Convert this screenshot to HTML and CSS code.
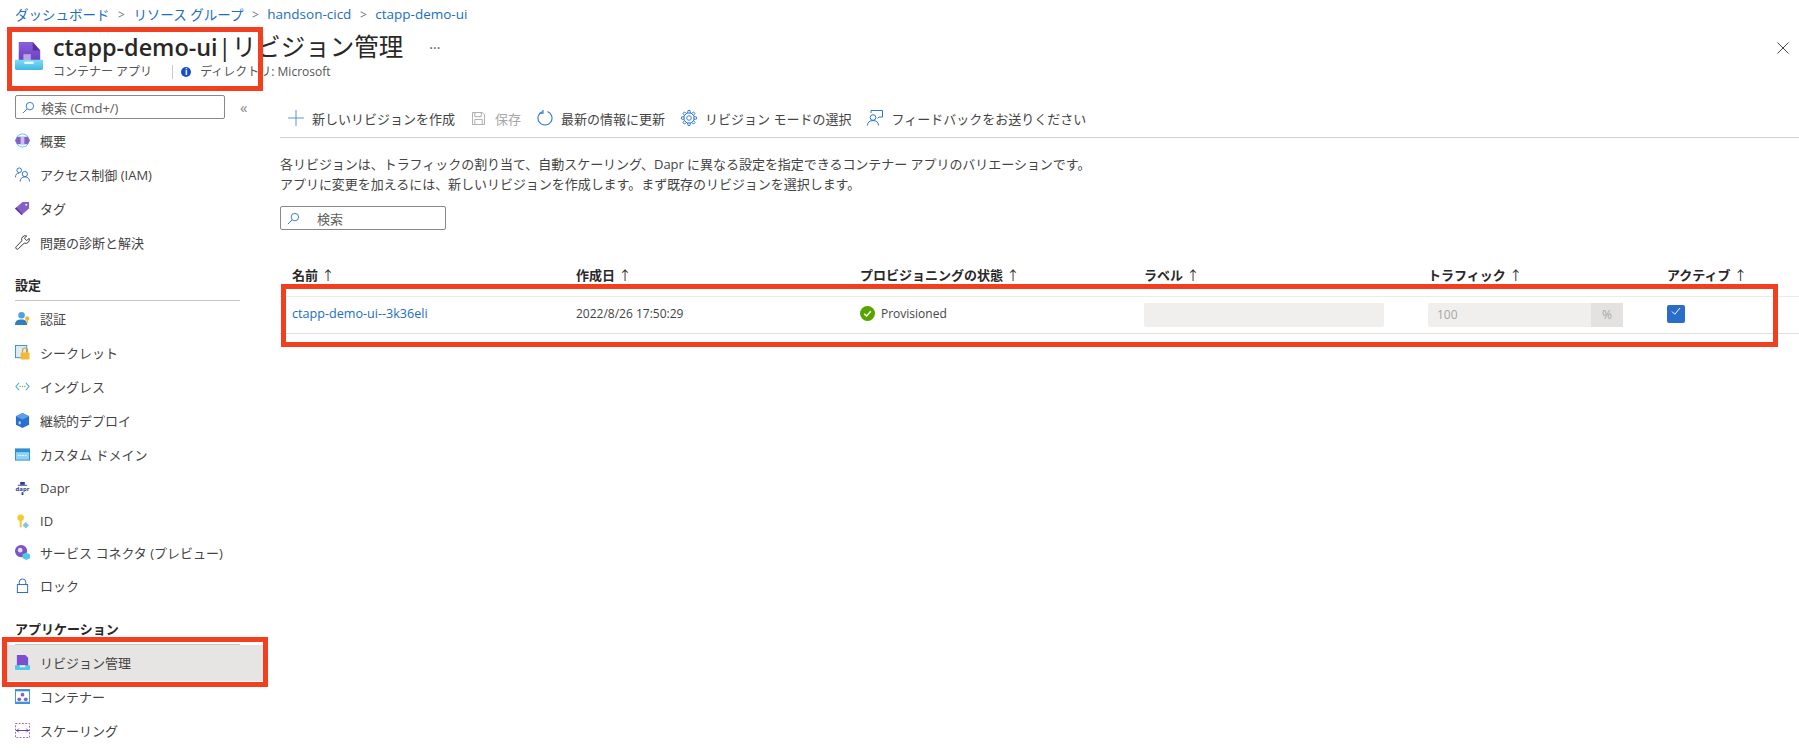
FILE: index.html
```html
<!DOCTYPE html>
<html lang="ja">
<head>
  <meta charset="UTF-8">
  <title>ctapp-demo-ui | リビジョン管理</title>
  <link rel="stylesheet" href="styles.css">
</head>
<body>

  <nav class="crumbs">
    <a>ダッシュボード</a><span class="sep">&gt;</span>
    <a>リソース グループ</a><span class="sep">&gt;</span>
    <a>handson-cicd</a><span class="sep">&gt;</span>
    <a>ctapp-demo-ui</a>
  </nav>

  <header class="title-bar">
    <svg class="app-icon" viewBox="0 0 30 32">
      <defs>
        <linearGradient id="tray" x1="0" y1="0" x2="0" y2="1"><stop offset="0" stop-color="#7fdcf3"/><stop offset="1" stop-color="#3fb8e6"/></linearGradient>
        <linearGradient id="file" x1="0" y1="0" x2="0" y2="1"><stop offset="0" stop-color="#8a5fdc"/><stop offset="1" stop-color="#6a3fbf"/></linearGradient>
      </defs>
      <path d="M4 1h15l8 9v12H4z" fill="url(#file)"/>
      <path d="M19 1l8 9h-8z" fill="#57309f"/>
      <rect x="9" y="14" width="8" height="8" fill="#b9a2ea"/>
      <path d="M0 20h30v9a2 2 0 0 1-2 2H2a2 2 0 0 1-2-2z" fill="url(#tray)"/>
      <rect x="10" y="22" width="10" height="2.500" fill="#eef9fc"/>
    </svg>
    <div class="title-text">
      <h1><b>ctapp-demo-ui</b> | リビジョン管理<span class="more">···</span></h1>
      <div class="subtitle">
        <span>コンテナー アプリ</span>
        <span class="divider"></span>
        <span class="info">i</span>
        <span>ディレクトリ: Microsoft</span>
      </div>
    </div>
    <svg class="close" viewBox="0 0 12 12"><path d="M.5.500l11 11M11.500.500l-11 11" stroke="#444" fill="none"/></svg>
  </header>

  <div class="main">
    <aside class="side">
      <div class="side-search-row">
        <div class="search side-search">
          <svg class="mag" viewBox="0 0 14 14"><circle cx="8.500" cy="5.500" r="4" fill="none" stroke="#2a74d4"/><path d="M5.500 8.500L1 13" stroke="#2a74d4" fill="none"/></svg>
          <span>検索 (Cmd+/)</span>
        </div>
        <span class="collapse">«</span>
      </div>

      <a class="item"><svg viewBox="0 0 16 16"><circle cx="8" cy="8" r="7" fill="none" stroke="#5cc3e6"/><path d="M0 8l2.500-4h11L16 8l-2.500 4h-11z" fill="#8661c5"/><rect x="6" y="4" width="4" height="8" fill="#cdbdf0"/></svg>概要</a>
      <a class="item"><svg viewBox="0 0 16 16"><g fill="none" stroke="#2a6fd0"><circle cx="4.500" cy="3.500" r="2.500"/><path d="M.5 11c0-3 1.500-4.500 4-4.500"/><circle cx="10.500" cy="7.500" r="2.800"/><path d="M5.500 15.500c0-3 2-5 5-5s5 2 5 5"/></g></svg>アクセス制御 (IAM)</a>
      <a class="item"><svg viewBox="0 0 16 16"><path d="M0 8l8-7h7v7l-8 7z" fill="#8661c5"/><path d="M0 8l7 7 1-1-6.500-7z" fill="#5a34a8"/><circle cx="12" cy="4" r="1" fill="#fff"/></svg>タグ</a>
      <a class="item"><svg viewBox="0 0 16 16"><path d="M15 3.500l-2.500 2.500-2.500-2.500L12.500 1A4 4 0 0 0 7.300 6.200L1.300 12.500a1.500 1.500 0 0 0 2.200 2.200l6.300-6A4 4 0 0 0 15 3.500z" fill="none" stroke="#333"/></svg>問題の診断と解決</a>

      <h2 class="group">設定</h2>
      <a class="item"><svg viewBox="0 0 16 16"><circle cx="7" cy="4.500" r="3.500" fill="#4fa3d8"/><path d="M0 15c0-5 3-6 7-6s6 2 6 6z" fill="#2c7fc0"/><circle cx="13" cy="8" r="2.300" fill="#f2b632"/><rect x="12.300" y="9" width="1.500" height="4" fill="#f2b632"/></svg>認証</a>
      <a class="item"><svg viewBox="0 0 16 16"><rect x=".5" y=".5" width="12" height="13" fill="#dcecf8" stroke="#3c8fd0"/><rect x="6" y="8" width="9.500" height="7.500" rx="1" fill="#f5b82e"/><path d="M8 8V6a2.700 2.700 0 0 1 5.500 0v2" fill="none" stroke="#e29f17" stroke-width="1.200"/></svg>シークレット</a>
      <a class="item"><svg viewBox="0 0 16 10" class="wide"><path d="M4.500 1L1 5l3.500 4M11.500 1L15 5l-3.500 4" fill="none" stroke="#4aa8e0" stroke-width="1.200"/><g fill="#7cb82f"><circle cx="5.500" cy="5" r=".8"/><circle cx="8" cy="5" r=".8"/><circle cx="10.500" cy="5" r=".8"/></g></svg>イングレス</a>
      <a class="item"><svg viewBox="0 0 16 16"><path d="M8 0l7 3.500v9L8 16l-7-3.500v-9z" fill="#2a6fd0"/><path d="M8 0l7 3.500L8 7 1 3.500z" fill="#5ea0ee"/><rect x="4" y="9" width="2" height="3" fill="#cfe3fa"/></svg>継続的デプロイ</a>
      <a class="item"><svg viewBox="0 0 16 13" class="wide"><rect width="16" height="13" fill="#2f8fd0"/><rect x="1" y="4" width="14" height="8" fill="#8fd3f2"/><path d="M3 7.500h10" stroke="#fff" stroke-dasharray="1.500 1"/></svg>カスタム ドメイン</a>
      <a class="item"><svg viewBox="0 0 16 14" class="wide"><rect x="5.500" y="0" width="5" height="3" fill="#2b3f8f"/><rect x="3" y="3" width="10" height="1" fill="#2b3f8f"/><text x="8" y="10" text-anchor="middle" class="dapr-mark">dapr</text><rect x="7" y="11" width="2" height="3" fill="#2b3f8f"/></svg>Dapr</a>
      <a class="item row-id"><svg viewBox="0 0 16 16"><circle cx="6" cy="4" r="3.500" fill="#f5c932"/><rect x="5" y="6" width="2.200" height="8" fill="#f5c932"/><path d="M11.500 8.500l3.500 3.500-3.500 3.500L8 12z" fill="#7fc4ea"/></svg>ID</a>
      <a class="item row-conn"><svg viewBox="0 0 16 16"><circle cx="6.500" cy="6.500" r="6.500" fill="#7a55c4"/><circle cx="5.500" cy="5.500" r="2.500" fill="#e4dcf5"/><path d="M12 8l4 2v4l-4 2-4-2v-4z" fill="#50c8ea"/></svg>サービス コネクタ (プレビュー)</a>
      <a class="item"><svg viewBox="0 0 16 16"><rect x="2.500" y="7" width="11" height="8.500" fill="none" stroke="#2a5fd0"/><path d="M4.500 7V4.500a3.500 3.500 0 0 1 7 0V7" fill="none" stroke="#2a5fd0"/></svg>ロック</a>

      <h2 class="group group-app">アプリケーション</h2>
      <a class="item current"><svg viewBox="0 0 16 16"><path d="M2 0h9l3 3v10H2z" fill="#7b4fcf"/><path d="M0 11h16v4a1 1 0 0 1-1 1H1a1 1 0 0 1-1-1z" fill="#50c8ea"/><rect x="5" y="11" width="6" height="2" fill="#e8f6fb"/></svg>リビジョン管理</a>
      <a class="item"><svg viewBox="0 0 16 16"><rect width="16" height="16" fill="#3c96d2"/><rect x="1" y="2.500" width="14" height="11" fill="#fff"/><g fill="#8661c5"><circle cx="8" cy="6" r="2"/><circle cx="4.500" cy="11" r="2"/><circle cx="11.500" cy="11" r="2"/></g></svg>コンテナー</a>
      <a class="item"><svg viewBox="0 0 16 16"><rect x=".5" y=".5" width="15" height="15" fill="none" stroke="#8661c5" stroke-dasharray="2 1.500"/><path d="M1 8h14M4 6l-2 2 2 2M12 6l2 2-2 2" fill="none" stroke="#5a34a8"/></svg>スケーリング</a>
    </aside>

    <section class="content">
      <div class="toolbar">
        <a class="tool"><svg viewBox="0 0 16 16"><path d="M8 0v16M0 8h16" stroke="#5e93dd" fill="none"/></svg>新しいリビジョンを作成</a>
        <a class="tool off"><svg viewBox="0 0 14 14"><path d="M.5.500h10.500l2.500 2.500v10.500H.5z M3 .5v4.500h7V.5 M3 13.500V8h8v5.500" fill="none" stroke="#a8a8a8"/></svg>保存</a>
        <a class="tool"><svg viewBox="0 0 16 16"><path d="M5.500 1.500A7 7 0 1 0 10.500 1.500" fill="none" stroke="#2a74d4" stroke-width="1.100"/><path d="M6 0v3.200H2.800" fill="none" stroke="#2a74d4" stroke-width="1.100"/></svg>最新の情報に更新</a>
        <a class="tool"><svg viewBox="0 0 16 16">
          <defs><path id="tooth" d="M6.600 3 7 .5h2L9.400 3z" fill="#fff" stroke="#2a74d4" stroke-width=".9" stroke-linejoin="round"/></defs>
          <circle cx="8" cy="8" r="5.300" fill="none" stroke="#2a74d4" stroke-width=".9"/>
          <circle cx="8" cy="8" r="2.300" fill="none" stroke="#2a74d4" stroke-width=".9"/>
          <use href="#tooth"/><use href="#tooth" transform="rotate(45 8 8)"/><use href="#tooth" transform="rotate(90 8 8)"/><use href="#tooth" transform="rotate(135 8 8)"/><use href="#tooth" transform="rotate(180 8 8)"/><use href="#tooth" transform="rotate(225 8 8)"/><use href="#tooth" transform="rotate(270 8 8)"/><use href="#tooth" transform="rotate(315 8 8)"/>
        </svg>リビジョン モードの選択</a>
        <a class="tool"><svg viewBox="0 0 16 16"><circle cx="6" cy="7.500" r="2.800" fill="none" stroke="#2a74d4"/><path d="M.5 15.500c0-3 2-5 5.500-5s5.500 2 5.500 5" fill="none" stroke="#2a74d4"/><path d="M4 3V.5h11.500v6.500H12L10.500 8.500" fill="none" stroke="#2a74d4"/></svg>フィードバックをお送りください</a>
      </div>

      <p class="desc">各リビジョンは、トラフィックの割り当て、自動スケーリング、Dapr に異なる設定を指定できるコンテナー アプリのバリエーションです。<br>アプリに変更を加えるには、新しいリビジョンを作成します。まず既存のリビジョンを選択します。</p>

      <div class="search filter">
        <svg class="mag" viewBox="0 0 14 14"><circle cx="8.500" cy="5.500" r="4" fill="none" stroke="#2a74d4"/><path d="M5.500 8.500L1 13" stroke="#2a74d4" fill="none"/></svg>
        <span>検索</span>
      </div>

      <div class="grid grid-head">
        <div>名前 <span class="arrow">↑</span></div>
        <div>作成日 <span class="arrow">↑</span></div>
        <div>プロビジョニングの状態 <span class="arrow">↑</span></div>
        <div>ラベル <span class="arrow">↑</span></div>
        <div>トラフィック <span class="arrow">↑</span></div>
        <div>アクティブ <span class="arrow">↑</span></div>
      </div>
      <div class="grid grid-row">
        <div class="cell"><a class="link">ctapp-demo-ui--3k36eli</a></div>
        <div class="cell">2022/8/26 17:50:29</div>
        <div class="cell status">
          <svg viewBox="0 0 16 16"><circle cx="8" cy="8" r="8" fill="#57a300"/><path d="M4.500 8.300l2.500 2.400 4.500-5" fill="none" stroke="#fff" stroke-width="1.500"/></svg>
          Provisioned
        </div>
        <div><div class="field label-field"></div></div>
        <div><div class="field traffic"><span>100</span><span class="unit">%</span></div></div>
        <div><span class="check"><svg viewBox="0 0 12 12"><path d="M2 6.500l2.800 2.800L10 3" fill="none" stroke="#fff"/></svg></span></div>
      </div>
    </section>
  </div>

  <!-- red annotations over the screenshot -->
  <div class="mark mark-title"></div>
  <div class="mark mark-side"></div>
  <div class="mark mark-table"></div>

</body>
</html>
```

FILE: styles.css
```css
body {
  font-family: "Open Sans", "Noto Sans CJK JP", sans-serif;
  font-size: 13px;
  margin: 0;
  padding: 0;
  background-color: #fff;
  color: #323130;
  height: 751px;
  overflow: hidden;
  position: relative;
}
.crumbs {
  display: flex;
  align-items: center;
  height: 28px;
  padding-left: 15px;
  font-size: 13.5px;
  color: #1b6ec2;
}
.sep {
  margin: 0 8.5px;
  color: #777;
  font-size: 12px;
}
.title-bar {
  display: flex;
  height: 62px;
  padding-left: 15px;
}
.app-icon {
  width: 28px;
  height: 30px;
  margin-top: 13px;
  flex: none;
}
.title-text {
  margin-left: 10px;
}
h1 {
  margin: 0;
  padding-top: 2px;
  font-size: 24.5px;
  font-weight: 400;
  line-height: 34px;
  color: #292827;
  word-spacing: -6px;
}
h1 b {
  font-size: 23.4px;
  font-weight: 600;
}
.more {
  font-size: 14px;
  margin-left: 26px;
  vertical-align: 3px;
  color: #555;
}
.subtitle {
  display: flex;
  align-items: center;
  margin-top: -1px;
  font-size: 12px;
  line-height: 16px;
  color: #555;
}
.divider {
  width: 1px;
  height: 14px;
  background-color: #ccc;
  margin: 0 4px 0 20px;
}
.info {
  width: 10px;
  height: 10px;
  line-height: 10px;
  border-radius: 50%;
  background-color: #1a4fc4;
  color: #fff;
  font-size: 8px;
  font-weight: 700;
  text-align: center;
  margin: 0 9px 0 4px;
}
.close {
  width: 12px;
  height: 12px;
  position: absolute;
  top: 42px;
  right: 10px;
}
.main {
  display: flex;
}
.side {
  width: 240px;
  padding-left: 15px;
  flex: none;
}
.side-search-row {
  display: flex;
  align-items: center;
  height: 24px;
  margin-top: 5px;
  margin-bottom: 4px;
}
.search {
  display: flex;
  align-items: center;
  box-sizing: border-box;
  border: 1px solid #8a8886;
  border-radius: 2px;
  height: 24px;
  color: #605e5c;
  font-size: 13px;
}
.side-search {
  width: 210px;
}
.mag {
  width: 13px;
  height: 13px;
  margin: 0 6px;
}
.collapse {
  margin-left: 15px;
  font-size: 15px;
  color: #888;
}
.item {
  display: flex;
  align-items: center;
  height: 34px;
  color: #444;
  font-size: 13px;
}
.item svg {
  width: 15px;
  height: 15px;
  margin-right: 10px;
  flex: none;
}
.item svg.wide {
  height: 13px;
}
.dapr-mark {
  font-size: 6.500px;
  font-weight: 700;
  fill: #2b3f8f;
}
.row-id {
  height: 32px;
}
.row-conn {
  height: 31px;
}
.group {
  width: 225px;
  margin: 14px 0 0;
  height: 28px;
  line-height: 25px;
  box-sizing: border-box;
  font-size: 13px;
  font-weight: 600;
  color: #292827;
  border-bottom: 1px solid #c8c6c4;
}
.group-app {
  margin-top: 15px;
}
.item.current {
  background-color: #e6e5e3;
  width: 256px;
  height: 36px;
  margin-left: -8px;
  margin-bottom: -2px;
  padding-left: 8px;
  padding-bottom: 2px;
  box-sizing: border-box;
}
.content {
  flex: 1;
  padding-left: 25px;
  padding-top: 11px;
}
.toolbar {
  display: flex;
  align-items: center;
  box-sizing: border-box;
  height: 37px;
  border-bottom: 1px solid #d2d0ce;
  padding-left: 8px;
  padding-bottom: 2px;
  gap: 16px;
}
.tool {
  display: flex;
  align-items: center;
  color: #444;
}
.tool svg {
  width: 16px;
  height: 16px;
  margin-right: 8px;
}
.tool.off {
  color: #a6a6a6;
  margin-left: 1px;
}
.tool.off svg {
  width: 13px;
  height: 13px;
  margin-right: 10px;
}
.desc {
  margin: 16px 0 12px;
  line-height: 20px;
  letter-spacing: -0.04px;
  color: #444;
}
.filter {
  width: 166px;
}
.filter .mag {
  margin-right: 17px;
}
.grid {
  display: grid;
  grid-template-columns: 284px 284px 284px 284px 239px 1fr;
}
.grid > div {
  padding-left: 12px;
}
.grid-head {
  margin-top: 31px;
  height: 26px;
  align-items: center;
  font-weight: 600;
  color: #292827;
}
.arrow {
  font-weight: 400;
}
.grid-row {
  height: 38px;
  box-sizing: border-box;
  margin-top: 9px;
  align-items: center;
  border-top: 1px solid #edebe9;
  border-bottom: 1px solid #e1dfdd;
  color: #444;
  font-size: 12px;
}
.grid > .cell {
  padding-bottom: 4px;
}
.link {
  color: #1b6ec2;
  font-size: 12.600px;
}
.grid > .status {
  display: flex;
  align-items: center;
}
.status svg {
  width: 15px;
  height: 15px;
  margin-right: 6px;
}
.field {
  height: 24px;
  background-color: #f0efed;
  border-radius: 2px;
  box-sizing: border-box;
}
.label-field {
  width: 240px;
}
.traffic {
  width: 195px;
  display: flex;
  justify-content: space-between;
  line-height: 24px;
  color: #a6a6a6;
  padding-left: 9px;
}
.unit {
  width: 32px;
  background-color: #e3e2e0;
  text-align: center;
}
.check {
  display: block;
  width: 18px;
  height: 18px;
  margin-top: -6px;
  background-color: #2a6cc9;
  border-radius: 2px;
}
.check svg {
  width: 12px;
  height: 12px;
  margin: 3px;
  display: block;
}
.mark {
  position: absolute;
  box-sizing: border-box;
  border: 5px solid #f23f1f;
}
.mark-title {
  left: 7px;
  top: 27px;
  width: 256px;
  height: 64px;
}
.mark-side {
  left: 2px;
  top: 637px;
  width: 266px;
  height: 50px;
}
.mark-table {
  left: 281px;
  top: 284px;
  width: 1497px;
  height: 63px;
}
```
